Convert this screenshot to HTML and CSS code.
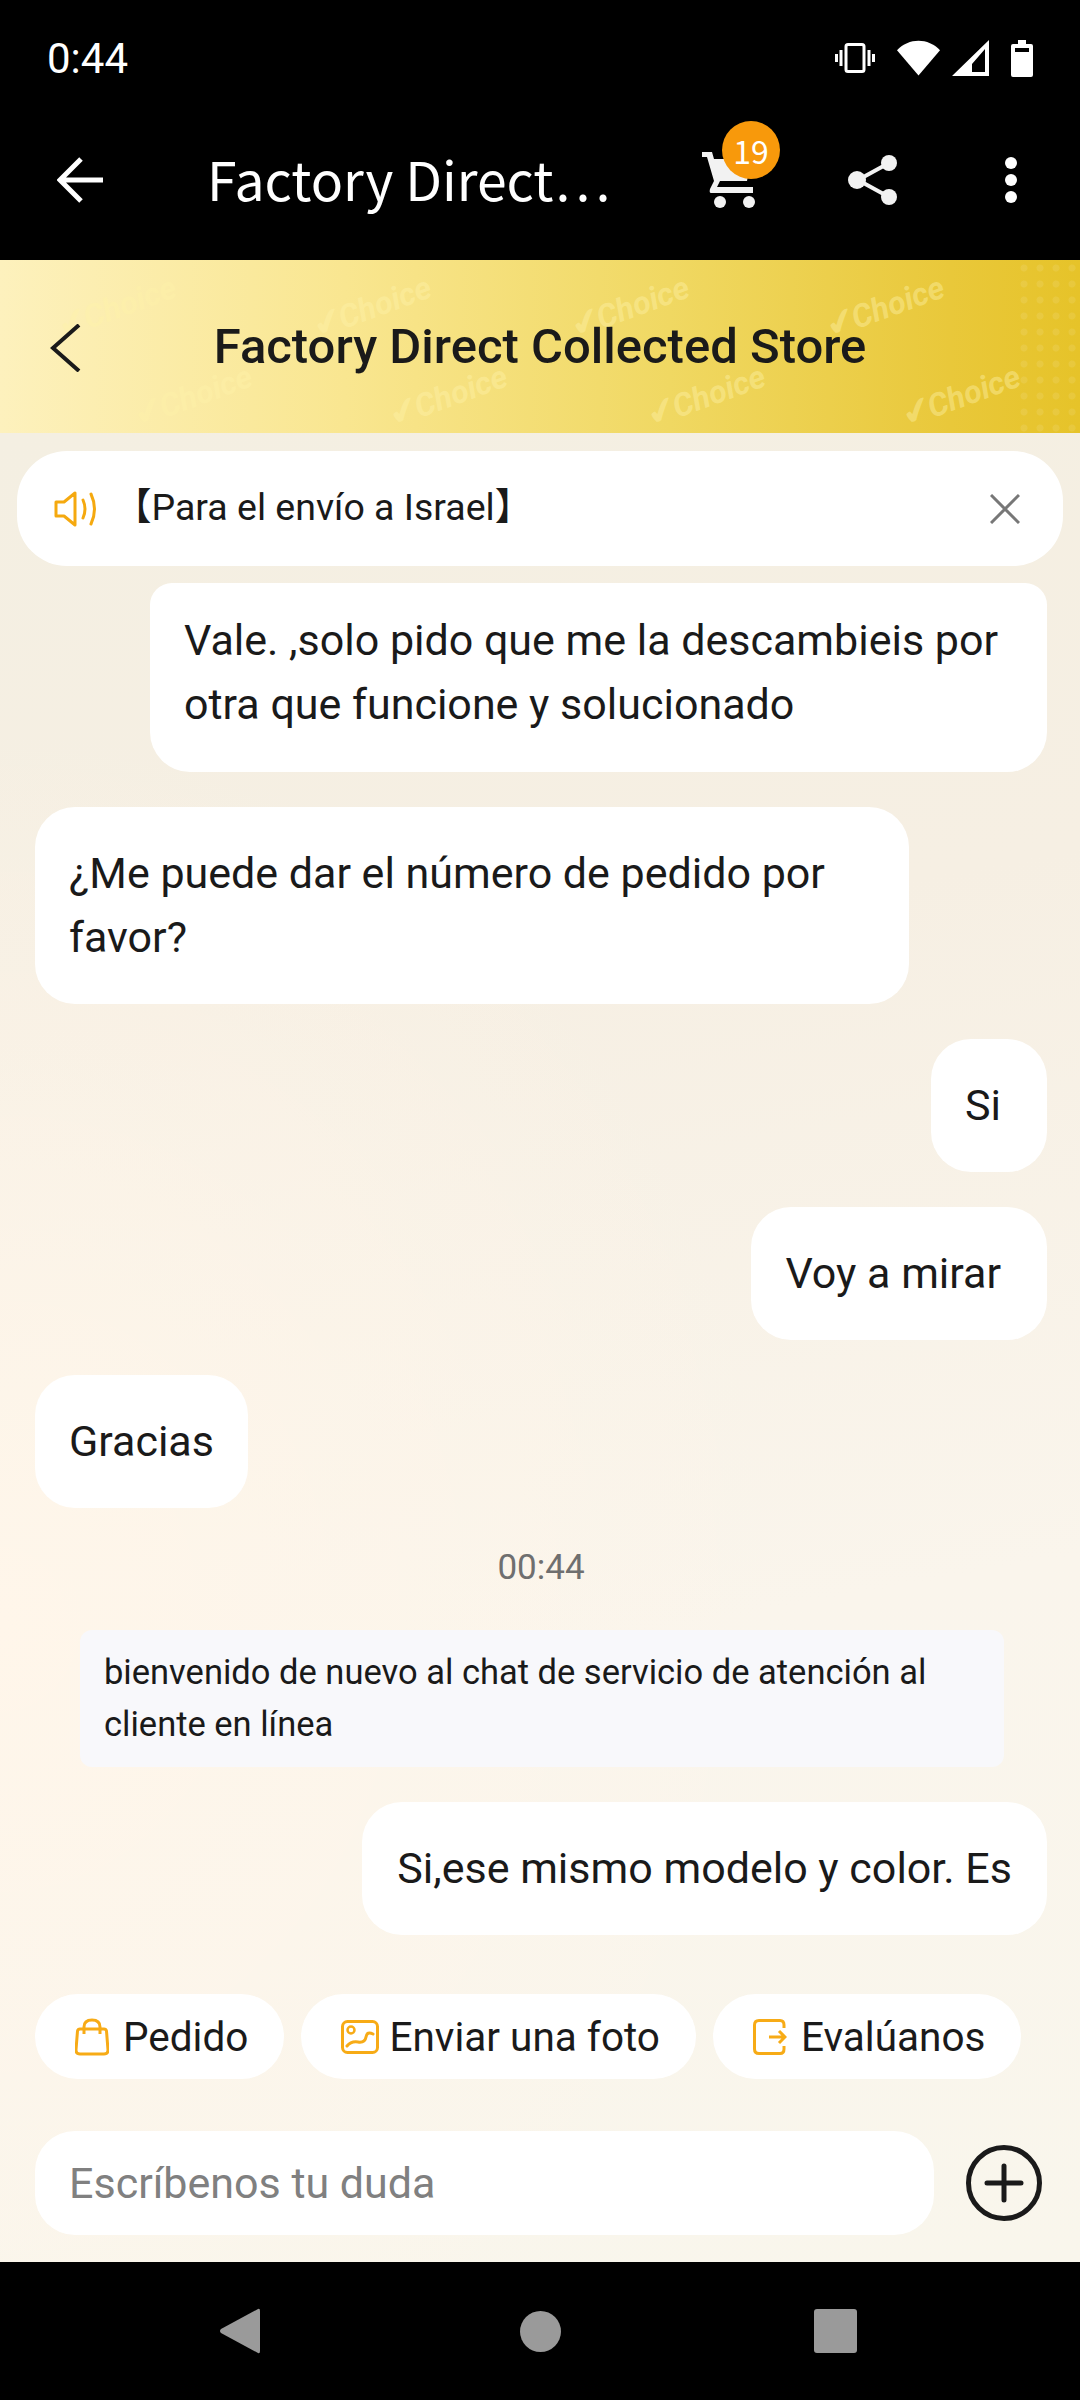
FILE: index.html
```html
<!DOCTYPE html>
<html lang="es">
<head>
  <meta charset="UTF-8">
  <meta name="viewport" content="width=device-width, initial-scale=1.0">
  <title>Factory Direct Collected Store</title>
  <link rel="stylesheet" href="styles.css">
</head>
<body>
  <div class="phone">

    <div class="statusbar">
      <span class="clock">0:44</span>
      <div class="status_icons">
        <svg width="40" height="30" viewBox="0 0 40 30"><rect x="11" y="1.5" width="18" height="27" rx="2" fill="none" stroke="#fff" stroke-width="3"/><path d="M6 7v16M1.500 11v8M34 7v16M38.500 11v8" stroke="#fff" stroke-width="3" fill="none"/></svg>
        <svg class="ic_wifi" width="43" height="36" viewBox="0 0 44 36"><path d="M0 10C12-3 32-3 44 10L22 36Z" fill="#fff"/></svg>
        <svg class="ic_signal" width="37" height="36" viewBox="0 0 37 36"><path d="M37 0V36H0ZM33 9 20 24V32H33Z" fill="#fff" fill-rule="evenodd"/></svg>
        <svg class="ic_battery" width="22" height="37" viewBox="0 0 22 37"><path d="M7 0H15V4H20Q22 4 22 6V35Q22 37 20 37H2Q0 37 0 35V6Q0 4 2 4H7ZM4 8V12H18V8Z" fill="#fff" fill-rule="evenodd"/></svg>
      </div>
    </div>

    <div class="toolbar">
      <svg class="tb_back" width="48" height="46" viewBox="0 0 48 46"><path d="M46 23H5M24 2 3 23 24 44" fill="none" stroke="#fff" stroke-width="5"/></svg>
      <span class="tb_title">Factory Direct…</span>
      <div class="cart">
        <svg width="54" height="58" viewBox="0 0 54 58"><path d="M1 1H11L13 8H50L46 30H19L16 36H52V42H10Q8 42 9 38L13 30 6 6H1Z" fill="#f2f2f2"/><circle cx="19" cy="51" r="6" fill="#f2f2f2"/><circle cx="48" cy="51" r="6" fill="#f2f2f2"/></svg>
        <span class="badge">19</span>
      </div>
      <svg class="tb_share" width="50" height="52" viewBox="0 0 50 52"><path d="M41 9 10 26 41 43" fill="none" stroke="#f2f2f2" stroke-width="4"/><circle cx="41" cy="9" r="8" fill="#f2f2f2"/><circle cx="9" cy="26" r="9" fill="#f2f2f2"/><circle cx="41" cy="43" r="8" fill="#f2f2f2"/></svg>
      <svg class="tb_more" width="14" height="48" viewBox="0 0 14 48"><circle cx="7" cy="7" r="6" fill="#fff"/><circle cx="7" cy="24" r="6" fill="#fff"/><circle cx="7" cy="41" r="6" fill="#fff"/></svg>
    </div>

    <div class="store_head">
      <span class="wm w1"><i>✔</i>Choice</span>
      <span class="wm w2"><i>✔</i>Choice</span>
      <span class="wm w3"><i>✔</i>Choice</span>
      <span class="wm w4"><i>✔</i>Choice</span>
      <span class="wm w5"><i>✔</i>Choice</span>
      <span class="wm w6"><i>✔</i>Choice</span>
      <span class="wm w7"><i>✔</i>Choice</span>
      <span class="wm w8"><i>✔</i>Choice</span>
      <svg class="store_back" width="31" height="48" viewBox="0 0 31 48"><path d="M29 1 3 24 29 47" fill="none" stroke="#1a1a1a" stroke-width="4"/></svg>
      <h1>Factory Direct Collected Store</h1>
    </div>

    <div class="chat">
      <div class="notice">
        <svg width="44" height="36" viewBox="0 0 44 36"><path d="M2 11H10L21 2V34L10 25H2Z" fill="none" stroke="#f5a90f" stroke-width="3" stroke-linejoin="round"/><path d="M29 9Q33 18 29 27M37 3Q44 18 37 33" fill="none" stroke="#f5a90f" stroke-width="3" stroke-linecap="round"/></svg>
        <span class="notice_text">【Para el envío a Israel】</span>
        <svg class="notice_close" width="30" height="30" viewBox="0 0 30 30"><path d="M1 1 29 29M29 1 1 29" stroke="#777" stroke-width="3"/></svg>
      </div>

      <div class="messages">
        <div class="msg me first">Vale. ,solo pido que me la descambieis por otra que funcione y solucionado</div>
        <div class="msg them second">¿Me puede dar el número de pedido por favor?</div>
        <div class="msg me">Si</div>
        <div class="msg me">Voy a mirar</div>
        <div class="msg them">Gracias</div>
        <div class="time">00:44</div>
        <div class="sys">bienvenido de nuevo al chat de servicio de atención al cliente en línea</div>
        <div class="msg me last">Si,ese mismo modelo y color. Es</div>
      </div>

      <div class="chips">
        <div class="chip">
          <svg width="34" height="38" viewBox="0 0 34 38"><path d="M5 11H29Q31 11 31.500 13L33 32Q33 36 29 36H5Q1 36 1 32L2.500 13Q3 11 5 11ZM9 16V9Q9 2 17 2 25 2 25 9V16" fill="none" stroke="#f7ab16" stroke-width="3" stroke-linejoin="round"/></svg>
          <span>Pedido</span>
        </div>
        <div class="chip chip_photo">
          <svg width="38" height="34" viewBox="0 0 38 34"><rect x="1.500" y="1.500" width="35" height="31" rx="5" fill="none" stroke="#f7ab16" stroke-width="3"/><circle cx="10" cy="10" r="3.500" fill="none" stroke="#f7ab16" stroke-width="2.500"/><path d="M6 26Q10 21 17 22T25 17 32 14" fill="none" stroke="#f7ab16" stroke-width="3" stroke-linecap="round"/></svg>
          <span>Enviar una foto</span>
        </div>
        <div class="chip">
          <svg width="34" height="36" viewBox="0 0 34 36"><path d="M31 9V6Q31 1.500 27 1.500H6Q1.500 1.500 1.500 6V30Q1.500 34.500 6 34.500H27Q31 34.500 31 30V27" fill="none" stroke="#f7ab16" stroke-width="3"/><path d="M16 18H32M26 12 32 18 26 24" fill="none" stroke="#f7ab16" stroke-width="3"/></svg>
          <span>Evalúanos</span>
        </div>
      </div>

      <div class="inputrow">
        <div class="input">Escríbenos tu duda</div>
        <svg width="76" height="76" viewBox="0 0 76 76"><circle cx="38" cy="38" r="35.500" fill="none" stroke="#1a1a1a" stroke-width="5"/><path d="M38 21V55M21 38H55" stroke="#1a1a1a" stroke-width="5" stroke-linecap="round"/></svg>
      </div>
    </div>

    <div class="navbar">
      <svg width="42" height="46" viewBox="0 0 42 46"><path d="M38 1Q40 0 40 3V43Q40 46 38 45L1 25Q-1 23 1 21Z" fill="#9a9a9a"/></svg>
      <svg class="nav_home" width="41" height="41" viewBox="0 0 41 41"><circle cx="20.500" cy="20.500" r="20.500" fill="#9a9a9a"/></svg>
      <svg class="nav_recent" width="43" height="44" viewBox="0 0 43 44"><rect width="43" height="44" rx="3" fill="#9a9a9a"/></svg>
    </div>

  </div>
</body>
</html>
```

FILE: styles.css
```css
*{
  box-sizing: border-box;
  font-family: Roboto, "Noto Sans CJK SC", sans-serif;
}

body{
  margin:0;
  background:#000;
}

.phone{
  width:1080px;
  height:2400px;
  display:flex;
  flex-direction: column;
  overflow:hidden;
}

/* status bar */
.statusbar{
  height:78px;
  padding:38px 47px 0 47px;
  display:flex;
  justify-content: space-between;
  align-items: center;
  color:#fff;
  flex:none;
}

.clock{
  font-size:42px;
}

.status_icons{
  display:flex;
  align-items: center;
}

.ic_wifi{ margin-left:22px; }
.ic_signal{ margin-left:12px; }
.ic_battery{ margin-left:22px; }

/* toolbar */
.toolbar{
  height:182px;
  flex:none;
  display:flex;
  align-items: center;
  padding:22px 0 0 57px;
  color:#fff;
}

.tb_title{
  font-family: "Noto Sans CJK SC", sans-serif;
  font-size:53.5px;
  margin-left:102px;
  margin-top:-5px;
  width:494px;
  white-space: nowrap;
}

.cart{
  position:relative;
  width:54px;
  height:58px;
  flex:none;
}

.badge{
  position:absolute;
  left:21px;
  top:-30px;
  width:58px;
  height:58px;
  border-radius:50%;
  background:#f8990b;
  display:flex;
  align-items: center;
  justify-content: center;
  font-family: "Noto Sans CJK SC", sans-serif;
  font-size:32px;
}

.tb_share{
  margin-left:93px;
}

.tb_more{
  margin-left:106px;
}

/* store header */
.store_head{
  position:relative;
  height:173px;
  flex:none;
  overflow:hidden;
  display:flex;
  align-items: center;
  justify-content: center;
  background:linear-gradient(90deg, #fdf1bd 0%, #f9e690 32%, #f0d862 62%, #e9c83a 88%, #e6c329 100%);
}

.store_head::after{
  content:"";
  position:absolute;
  top:0;
  right:0;
  width:64px;
  height:100%;
  background:radial-gradient(circle, rgba(255,255,255,.09) 3px, transparent 4px) 0 0 / 16px 16px;
}

.store_head h1{
  margin:0;
  font-size:49px;
  font-weight:500;
  color:#1a1a1a;
}

.store_back{
  position:absolute;
  left:50px;
  top:64px;
}

.wm{
  position:absolute;
  font-size:32px;
  line-height:22px;
  font-style:italic;
  font-weight:700;
  color:rgba(255,243,170,.42);
  transform:translate(-50%, -50%) rotate(-20deg);
  white-space: nowrap;
}
.wm i{
  font-family: "DejaVu Sans", sans-serif;
  font-size:36px;
  line-height:0;
  font-style:normal;
  margin-right:-3px;
}
.w1{ left:117px; top:47px; }
.w2{ left:372px; top:47px; }
.w3{ left:630px; top:47px; }
.w4{ left:885px; top:47px; }
.w5{ left:193px; top:136px; }
.w6{ left:448px; top:136px; }
.w7{ left:706px; top:136px; }
.w8{ left:961px; top:136px; }

/* chat */
.chat{
  flex:1;
  display:flex;
  flex-direction: column;
  min-height:0;
  padding-top:18px;
  background:
    radial-gradient(ellipse 800px 900px at 0% 65%, #fff6ea 0%, rgba(255,246,234,0) 100%),
    linear-gradient(170deg, #f4efe2 0%, #f6efe3 30%, #faf5ec 65%, #f9f6ec 100%);
}

.notice{
  margin:0 17px;
  height:115px;
  border-radius:50px;
  background:#fff;
  display:flex;
  align-items: center;
  padding:0 43px 0 37px;
  flex:none;
}

.notice_text{
  font-size:37.5px;
  color:#1a1a1a;
  flex:1;
  margin-left:16px;
  margin-top:-10px;
}

.messages{
  margin-top:17px;
  padding:0 33px 0 35px;
  display:flex;
  flex-direction: column;
  align-items: flex-start;
  flex:none;
}

.msg{
  background:#fff;
  border-radius:40px;
  padding:34px 34px 35px;
  font-size:43px;
  line-height:64px;
  color:#1a1a1a;
  margin-bottom:35px;
}

.msg.me{
  align-self: flex-end;
  padding-right:46px;
}

.msg.last{
  padding-right:35px;
  padding-left:35px;
}

.first{
  width:897px;
  padding-top:25px;
  padding-bottom:36px;
  border-radius:22px 22px 40px 40px;
}

.second{
  width:874px;
}

.time{
  align-self: center;
  font-size:35px;
  color:#6f6f6f;
  margin-top:5px;
  margin-bottom:42px;
  line-height:40px;
}

.sys{
  margin-left:45px;
  width:924px;
  height:137px;
  padding:16px 24px;
  background:#f8f8fb;
  border-radius:12px;
  font-size:34.5px;
  line-height:52px;
  color:#1a1a1a;
  margin-bottom:35px;
}

/* bottom */
.chips{
  margin-top:24px;
  padding-left:35px;
  display:flex;
  gap:17px;
  flex:none;
}

.chip{
  height:85px;
  border-radius:43px;
  background:#fff;
  padding:0 36px 0 40px;
  display:flex;
  align-items: center;
  gap:14px;
  font-size:40.5px;
  color:#1a1a1a;
}

.chip_photo{
  gap:10px;
}

.inputrow{
  margin-top:52px;
  padding:0 38px 0 35px;
  display:flex;
  align-items: center;
  justify-content: space-between;
  flex:none;
}

.input{
  width:899px;
  height:104px;
  border-radius:40px;
  background:#fff;
  padding-left:34px;
  display:flex;
  align-items: center;
  font-size:43px;
  color:#808080;
}

.navbar{
  height:138px;
  flex:none;
  display:flex;
  align-items: center;
  background:#000;
  padding-left:220px;
}

.nav_home{
  margin-left:258px;
}

.nav_recent{
  margin-left:253px;
}
```
